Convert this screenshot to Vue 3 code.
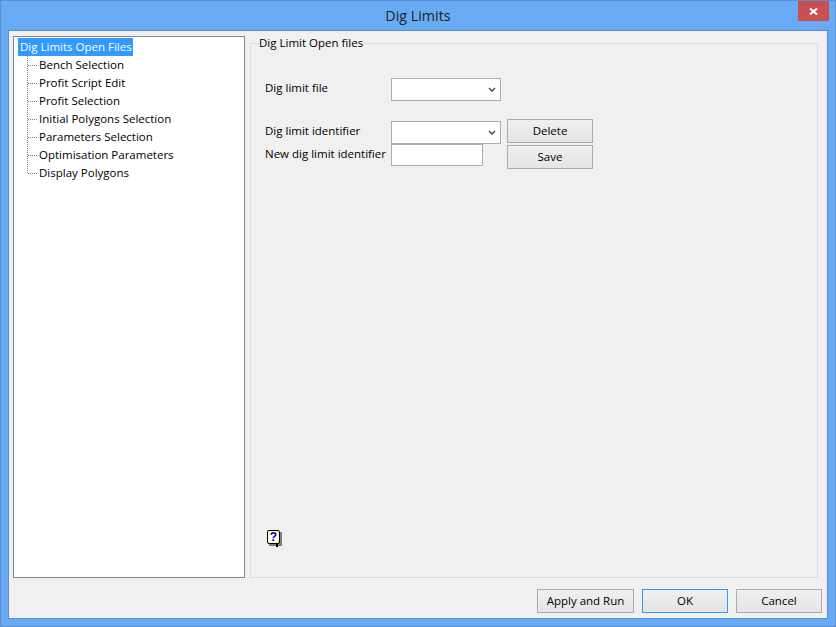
<template>
  <div class="window">
    <header class="titlebar">
      <span class="title">Dig Limits</span>
      <button class="close" aria-label="Close">
        <svg width="9" height="7" viewBox="0 0 9 7"><path d="M1 .5l7 6M8 .5l-7 6" fill="none" stroke="#fff" stroke-width="2"/></svg>
      </button>
    </header>
    <main class="client">
      <div class="body">
        <nav class="tree">
          <div class="root"><span class="sel">Dig Limits Open Files</span></div>
          <ul class="children">
            <li v-for="item in items" :key="item">{{ item }}</li>
          </ul>
        </nav>
        <fieldset class="group">
          <legend>Dig Limit Open files</legend>
          <div class="file-row">
            <label>Dig limit file</label>
            <div class="select"><svg width="8" height="6" viewBox="0 0 8 6"><path d="M1 1l3 3 3-3" fill="none" stroke="#555" stroke-width="1.6"/></svg></div>
          </div>
          <div class="id-grid">
            <label class="l1">Dig limit identifier</label>
            <div class="select s1"><svg width="8" height="6" viewBox="0 0 8 6"><path d="M1 1l3 3 3-3" fill="none" stroke="#555" stroke-width="1.6"/></svg></div>
            <button class="btn b1">Delete</button>
            <label class="l2">New dig limit identifier</label>
            <div class="input"></div>
            <button class="btn b2">Save</button>
          </div>
          <div class="spacer"></div>
          <div class="help">
            <div class="help-shadow"></div>
            <div class="help-face">?</div>
            <div class="help-tail"></div>
          </div>
        </fieldset>
      </div>
      <footer class="actions">
        <button class="btn apply">Apply and Run</button>
        <button class="btn ok">OK</button>
        <button class="btn">Cancel</button>
      </footer>
    </main>
  </div>
</template>

<script setup>
const items = [
  'Bench Selection',
  'Profit Script Edit',
  'Profit Selection',
  'Initial Polygons Selection',
  'Parameters Selection',
  'Optimisation Parameters',
  'Display Polygons'
]
</script>

<style>
html, body { margin: 0; background: #69aaf5; overflow: hidden; }
</style>

<style scoped>
.window {
  box-sizing: border-box;
  width: 836px;
  height: 627px;
  display: flex;
  flex-direction: column;
  background: #69aaf5;
  border: 1px solid #5a8fd0;
  padding: 0 7px 7px;
  font: 11.5px/16px "Open Sans", "Noto Sans", sans-serif;
  color: #000;
}
.titlebar {
  height: 29px;
  flex: none;
  display: flex;
  justify-content: center;
  position: relative;
}
.title {
  font-size: 14.3px;
  line-height: 30px;
  color: #222;
}
.close {
  position: absolute;
  right: -1px;
  top: 0;
  width: 31px;
  height: 20px;
  padding: 0;
  border: 0;
  background: #c75050;
  display: flex;
  align-items: center;
  justify-content: center;
}
.client {
  flex: 1;
  display: flex;
  flex-direction: column;
  background: #f0f0f0;
  border: 1px solid #5a8fd0;
  border-width: 1px 0 0 0;
  padding: 5px 6px 6px 5px;
  min-height: 0;
  box-shadow: -1px 0 0 #5a8fd0 inset, 1px 0 0 #5a8fd0 inset, 0 -1px 0 #5a8fd0 inset;
}
.body {
  flex: 1;
  display: flex;
  gap: 5px;
  min-height: 0;
}
.tree {
  box-sizing: border-box;
  width: 232px;
  background: #fff;
  border: 1px solid #828790;
  padding: 1px 4px;
}
.root { height: 18px; }
.sel {
  display: inline-block;
  background: #3399ff;
  color: #fff;
  height: 18px;
  line-height: 18px;
  padding: 0 1px 0 2px;
  white-space: nowrap;
}
.children {
  list-style: none;
  margin: 0;
  padding: 0 0 0 21px;
  position: relative;
}
.children::before {
  content: "";
  position: absolute;
  left: 9px;
  top: 0;
  height: 117px;
  border-left: 1px dotted #808080;
}
.children li {
  height: 18px;
  line-height: 18px;
  position: relative;
  white-space: nowrap;
}
.children li::before {
  content: "";
  position: absolute;
  left: -11px;
  top: 9px;
  width: 9px;
  border-top: 1px dotted #808080;
}
.group {
  box-sizing: border-box;
  flex: 1;
  min-width: 0;
  margin: 0 4px 0 0;
  padding: 0 14px 29px;
  border: 1px solid #dcdcdc;
  display: flex;
  flex-direction: column;
}
legend {
  padding: 0;
  margin-left: -6px;
  line-height: 14px;
  white-space: nowrap;
}
.file-row {
  display: flex;
  align-items: center;
  margin-top: 28px;
  height: 23px;
}
.file-row label {
  width: 126px;
  position: relative;
  top: -2px;
}
.select {
  box-sizing: border-box;
  width: 110px;
  height: 23px;
  background: #fff;
  border: 1px solid #abadb3;
  display: flex;
  align-items: center;
  justify-content: flex-end;
  padding-right: 4px;
}
.id-grid {
  display: grid;
  grid-template-columns: 126px 116px 86px;
  grid-template-rows: 24px 24px;
  row-gap: 2px;
  margin-top: 18px;
  align-items: start;
}
.id-grid label { line-height: 16px; white-space: nowrap; }
.l1 { margin-top: 4px; }
.l2 { margin-top: 1px; }
.s1 { margin-top: 2px; }
.input {
  box-sizing: border-box;
  width: 92px;
  height: 22px;
  background: #fff;
  border: 1px solid #abadb3;
  margin-top: -1px;
}
.btn {
  box-sizing: border-box;
  width: 86px;
  height: 24px;
  padding: 0;
  border: 1px solid #acacac;
  background: linear-gradient(#f0f0f0, #e5e5e5);
  font: inherit;
  color: #000;
}
.spacer { flex: 1; }
.help {
  position: relative;
  width: 16px;
  height: 18px;
  margin-left: 2px;
}
.help-face {
  position: absolute;
  left: 0;
  top: 0;
  box-sizing: border-box;
  width: 13px;
  height: 14px;
  border: 1px solid #000;
  border-radius: 2px;
  background:
    radial-gradient(circle, #fff 60%, rgba(255, 255, 255, 0.35) 75%) 0 0 / 100% 100%,
    repeating-conic-gradient(#ffff00 0 25%, #fff 0 50%) 0 0 / 2px 2px;
  color: #00008b;
  font: bold 12px/12px "Liberation Sans", sans-serif;
  text-align: center;
}
.help-shadow {
  position: absolute;
  left: 2px;
  top: 2px;
  width: 13px;
  height: 14px;
  background: #808080;
}
.help-tail {
  position: absolute;
  left: 9px;
  top: 13px;
  width: 2px;
  height: 4px;
  background: #000;
}
.actions {
  flex: none;
  display: flex;
  justify-content: flex-end;
  gap: 8px;
  margin-top: 11px;
}
.apply { width: 97px; }
.ok { border-color: #3399ff; }
</style>
